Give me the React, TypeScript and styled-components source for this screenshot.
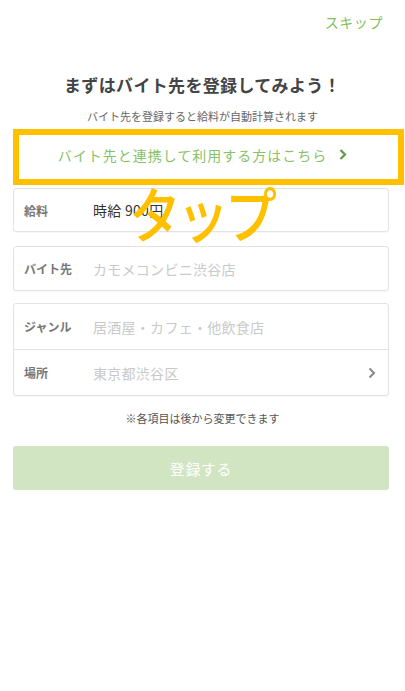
import styled, { createGlobalStyle } from 'styled-components';

const GlobalStyle = createGlobalStyle`
  * {
    box-sizing: border-box;
  }

  body {
    margin: 0;
    background: #ffffff;
    font-family: 'Noto Sans CJK JP', 'Noto Sans', sans-serif;
  }
`;

const Screen = styled.div`
  width: 405px;
  height: 691px;
  background: #ffffff;
  display: flex;
  flex-direction: column;
`;

const TopBar = styled.div`
  height: 44px;
  display: flex;
  justify-content: flex-end;
  align-items: center;
  padding-right: 22px;
`;

const SkipLink = styled.span`
  font-size: 14px;
  color: #7fc05c;
  letter-spacing: 0.04em;
`;

const Title = styled.h1`
  margin: 28px 0 0;
  font-size: 17px;
  line-height: 26px;
  font-weight: 700;
  color: #444444;
  text-align: center;
  letter-spacing: 0.02em;
`;

const SubTitle = styled.p`
  margin: 10px 0 0;
  font-size: 11px;
  line-height: 16px;
  color: #666666;
  text-align: center;
`;

const LinkRow = styled.div`
  position: relative;
  margin: 5px 13px 3px;
  height: 56px;
  padding-bottom: 5px;
  display: flex;
  justify-content: center;
  align-items: center;
  gap: 12px;
  font-size: 14px;
  color: #86c267;
  letter-spacing: 1px;
`;

const LinkArrow = styled.svg`
  width: 8px;
  height: 11px;
`;

const Highlight = styled.div`
  position: absolute;
  left: 0;
  top: 0;
  width: 391px;
  height: 56px;
  border: 6px solid #ffc000;
  pointer-events: none;
`;

const Form = styled.div`
  position: relative;
  margin: 0 16px 0 13px;
  display: flex;
  flex-direction: column;
`;

const Card = styled.div<{ $gap?: number }>`
  margin-top: ${p => p.$gap ?? 0}px;
  border: 1px solid #e3e3e3;
  border-radius: 3px;
  background: #ffffff;
  box-shadow: 0 1px 1px rgba(0, 0, 0, 0.03);
`;

const Row = styled.div<{ $divider?: boolean; $height: number }>`
  height: ${p => p.$height}px;
  display: flex;
  align-items: center;
  padding: 0 12px 0 10px;
  border-top: ${p => (p.$divider ? '1px solid #e3e3e3' : 'none')};
`;

const Label = styled.span`
  width: 69px;
  font-size: 12px;
  font-weight: 700;
  color: #777777;
`;

const Value = styled.span<{ $placeholder?: boolean }>`
  flex: 1;
  font-size: 14px;
  color: ${p => (p.$placeholder ? '#c9c9c9' : '#333333')};
  letter-spacing: 0.02em;
`;

const Chevron = styled.svg`
  width: 8px;
  height: 12px;
`;

const TapNote = styled.span`
  position: absolute;
  left: 116px;
  top: -8px;
  font-size: 52px;
  line-height: 66px;
  font-weight: 500;
  color: #ffc000;
  letter-spacing: -4px;
  transform: scaleY(1.15);
  pointer-events: none;
`;

const Note = styled.p`
  margin: 14px 0 0;
  font-size: 11px;
  line-height: 16px;
  color: #555555;
  text-align: center;
`;

const SubmitButton = styled.button`
  margin: 20px 16px 0 13px;
  height: 44px;
  border: none;
  border-radius: 3px;
  background: #d2e5c3;
  color: #ffffff;
  font-family: inherit;
  font-size: 15px;
  letter-spacing: 0.04em;
`;

const App = () => {
  return (
    <Screen>
      <GlobalStyle />
      <TopBar>
        <SkipLink>スキップ</SkipLink>
      </TopBar>
      <Title>まずはバイト先を登録してみよう！</Title>
      <SubTitle>バイト先を登録すると給料が自動計算されます</SubTitle>
      <LinkRow>
        バイト先と連携して利用する方はこちら
        <LinkArrow viewBox="0 0 8 11">
          <path d="M1.5 1 L6 5.5 L1.5 10" fill="none" stroke="#5f9e45" strokeWidth="2.2" />
        </LinkArrow>
        <Highlight />
      </LinkRow>
      <Form>
        <Card>
          <Row $height={42}>
            <Label>給料</Label>
            <Value>時給 900円</Value>
          </Row>
        </Card>
        <Card $gap={14}>
          <Row $height={43}>
            <Label>バイト先</Label>
            <Value $placeholder>カモメコンビニ渋谷店</Value>
          </Row>
        </Card>
        <Card $gap={12}>
          <Row $height={45}>
            <Label>ジャンル</Label>
            <Value $placeholder>居酒屋・カフェ・他飲食店</Value>
          </Row>
          <Row $divider $height={46}>
            <Label>場所</Label>
            <Value $placeholder>東京都渋谷区</Value>
            <Chevron viewBox="0 0 8 12">
              <path d="M1.5 1.5 L6 6 L1.5 10.5" fill="none" stroke="#888888" strokeWidth="2" />
            </Chevron>
          </Row>
        </Card>
        <TapNote>タップ</TapNote>
      </Form>
      <Note>※各項目は後から変更できます</Note>
      <SubmitButton>登録する</SubmitButton>
    </Screen>
  );
};

export default App;
